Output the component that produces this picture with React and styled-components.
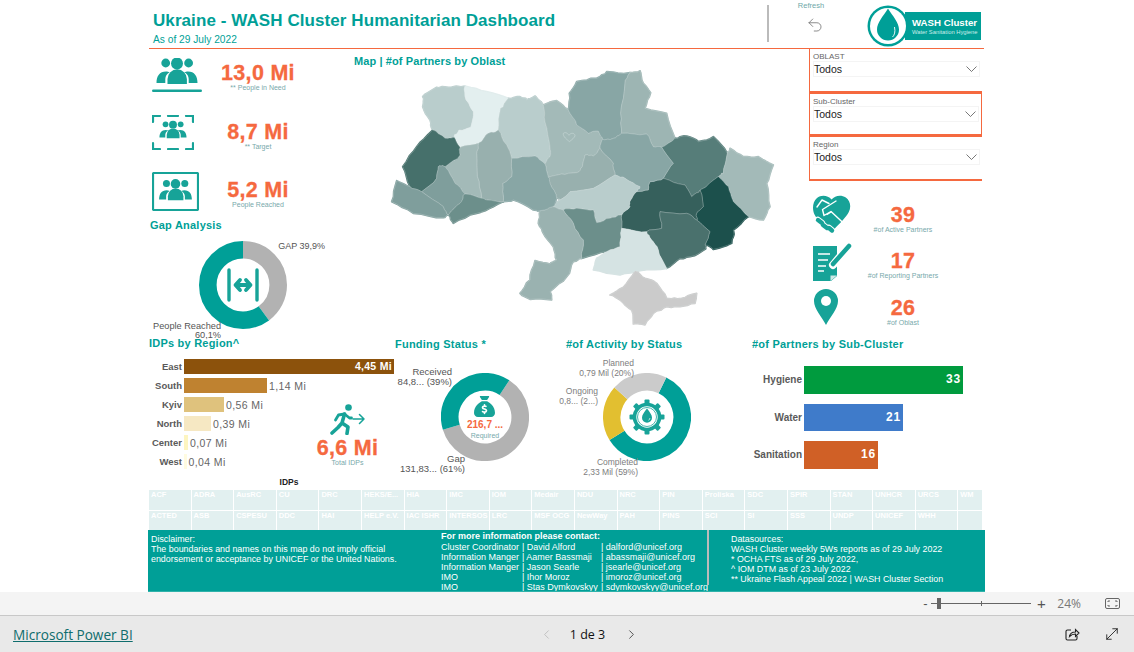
import React from "react";
import styled, { createGlobalStyle } from "styled-components";
import { FaSackDollar } from "react-icons/fa6";
import { Undo2, ChevronLeft, ChevronRight, MoveDiagonal } from "lucide-react";

const TEAL = "#009f97";
const ICON = "#17a398";
const ORANGE = "#f5693f";

const GlobalStyle = createGlobalStyle`
  html, body {
    margin: 0;
    padding: 0;
    overflow: hidden;
    background: #fff;
    font-family: "Liberation Sans", Arial, sans-serif;
  }
`;

const oblasts = [
  { fill: "#b9cdcc", d: "158,240 150,210 128,170 128,140 170,112 205,112 255,108 258,150 280,185 272,232 237,240 222,262 195,265" },
  { fill: "#e3efef", d: "255,108 320,125 385,145 362,175 355,240 325,250 295,280 240,292 222,262 237,240 272,232 280,185 258,150" },
  { fill: "#b9cdcc", d: "385,145 420,140 440,150 465,138 490,165 495,215 510,290 510,320 495,342 465,318 395,325 380,285 355,240 362,175" },
  { fill: "#a3bab8", d: "490,165 530,152 565,180 590,225 625,250 655,243 668,268 660,295 640,318 615,315 607,350 590,368 545,372 505,382 495,342 510,320 510,290 495,215" },
  { fill: "#88a6a5", d: "565,180 568,130 590,95 650,85 680,65 750,68 735,100 722,190 725,250 700,265 668,268 655,243 625,250 590,225" },
  { fill: "#9db5b3", d: "750,68 780,62 790,100 812,128 795,175 860,190 885,265 845,292 820,290 800,252 725,250 722,190 735,100" },
  { fill: "#567d79", d: "885,265 920,258 955,275 1000,260 1042,310 1030,370 1015,380 960,420 935,440 915,405 850,385 880,340 845,292" },
  { fill: "#a3bab8", d: "1050,295 1090,320 1135,320 1180,345 1160,400 1170,470 1150,510 1105,500 1060,455 1045,410 1015,380 1030,370 1042,310" },
  { fill: "#1c504c", d: "1015,380 1045,410 1060,455 1105,500 1060,540 1055,580 1000,598 975,585 990,545 950,510 950,490 970,470 960,420" },
  { fill: "#36605c", d: "810,395 850,385 915,405 935,440 960,420 970,470 950,490 950,510 920,490 840,485 845,535 800,545 725,535 725,495 750,470 752,450 770,425 805,420" },
  { fill: "#4a716d", d: "840,485 920,490 950,510 990,545 975,585 975,598 930,620 900,625 860,655 835,600 815,570 800,545 845,535" },
  { fill: "#88a6a5", d: "668,268 700,265 725,250 800,252 820,290 845,292 880,340 850,385 810,395 805,420 770,425 780,410 735,385 705,375 700,340 660,295" },
  { fill: "#98b0ae", d: "505,382 545,372 590,368 607,350 615,315 640,318 660,295 700,340 705,375 640,415 570,425 540,450 530,445 510,400" },
  { fill: "#b9cdcc", d: "518,470 540,450 570,425 640,415 705,375 735,385 780,410 770,425 752,450 750,470 725,495 690,505 650,518 640,480 590,475 550,480" },
  { fill: "#6c8f8b", d: "550,480 590,475 640,480 650,518 690,505 725,495 725,535 720,590 680,605 605,625 610,570 580,520" },
  { fill: "#d5e3e3", d: "725,535 800,545 815,570 835,600 860,655 780,662 720,675 640,660 650,625 680,605 720,590" },
  { fill: "#9ab2b0", d: "480,482 518,470 550,480 580,520 610,570 605,625 580,635 560,680 510,725 515,750 450,748 420,730 450,690 465,632 510,642 530,630 520,590 490,550 475,520" },
  { fill: "#cbcbcb", d: "690,735 730,712 765,662 795,685 830,700 860,745 905,745 950,730 945,760 900,770 860,770 820,790 795,825 760,822 755,780 720,750" },
  { fill: "#88a6a5", d: "395,325 465,318 495,342 505,382 510,400 530,445 518,470 480,482 460,480 400,450 370,455 368,400 395,380" },
  { fill: "#98b0ae", d: "295,280 325,250 355,240 380,285 395,325 395,380 368,400 370,455 320,450 305,445 292,380 290,310" },
  { fill: "#a3bab8", d: "240,292 295,280 290,310 292,380 305,445 255,432 225,400 195,350 240,315" },
  { fill: "#46706b", d: "158,240 195,265 222,262 240,292 240,315 195,350 175,350 170,385 125,425 90,410 68,350 110,290" },
  { fill: "#7f9e9c", d: "175,350 195,350 225,400 255,432 240,460 205,495 190,470 125,425 170,385" },
  { fill: "#6c8f8b", d: "255,432 305,445 320,450 370,455 340,470 290,490 220,520 205,495 240,460" },
  { fill: "#7f9e9c", d: "50,392 90,410 125,425 190,470 205,495 190,503 100,490 35,455" },
];

// rough borders: the same edge gets the same wobble in both oblasts that share it
const wobble = (a, b, depth) => {
  if (depth === 0) return [];
  const seed = Math.abs(Math.sin((a[0] + b[0]) * 12.9898 + (a[1] + b[1]) * 78.233) * 43758.5453) % 1;
  const mid = [(a[0] + b[0]) / 2 + (seed - 0.5) * 5, (a[1] + b[1]) / 2 + ((seed * 7) % 1 - 0.5) * 5];
  return [...wobble(a, mid, depth - 1), mid, ...wobble(mid, b, depth - 1)];
};

const roughPoints = (d) => {
  const pts = d.split(" ").map((p) => p.split(",").map(Number));
  return pts
    .flatMap((p, i) => [p, ...wobble(p, pts[(i + 1) % pts.length], 2)])
    .map((p) => p.map((n) => n.toFixed(1)).join(","))
    .join(" ");
};

const regions = [
  { name: "East", value: "4,45 Mi", width: 210, color: "#8c520c", inside: true },
  { name: "South", value: "1,14 Mi", width: 83, color: "#bf8230" },
  { name: "Kyiv", value: "0,56 Mi", width: 40, color: "#dfc27d" },
  { name: "North", value: "0,39 Mi", width: 27, color: "#f6e8c3" },
  { name: "Center", value: "0,07 Mi", width: 4, color: "#fdf5c0" },
  { name: "West", value: "0,04 Mi", width: 2.5, color: "#fffbe0" },
];

const clusters = [
  { name: "Hygiene", value: 33, width: 159, color: "#009b3e" },
  { name: "Water", value: 21, width: 99, color: "#3f7bca" },
  { name: "Sanitation", value: 16, width: 74, color: "#d06026" },
];

const tiles = [
  "ACF", "ADRA", "AusRC", "CU", "DRC", "HEKS/E...", "HIA", "IMC", "IOM", "Medair", "NDU", "NRC", "PIN", "Proliska", "SDC", "SPIR", "STAN", "UNHCR", "URCS", "WM",
  "ACTED", "ASB", "CSPESU", "DDC", "HAI", "HELP e.V.", "IAC ISHR", "INTERSOS", "LRC", "MSF OCG", "NewWay", "PAH", "PINS", "SCI", "SI", "SSS", "UNDP", "UNICEF", "WHH", "",
];

const contacts = [
  ["Cluster Coordinator", "| David Alford", "| dalford@unicef.org"],
  ["Information Manger", "| Aamer Bassmaji", "| abassmaji@unicef.org"],
  ["Information Manger", "| Jason Searle", "| jsearle@unicef.org"],
  ["IMO", "| Ihor Moroz", "| imoroz@unicef.org"],
  ["IMO", "| Stas Dymkovskyy", "| sdymkovskyy@unicef.org"],
];

const Donut = ({ segments, start }) => {
  let used = 0;
  return (
    <svg width="88" height="88" viewBox="0 0 88 88">
      <g transform={`rotate(${start - 90} 44 44)`}>
        {segments.map((s) => {
          const circle = (
            <circle
              key={s.color}
              cx="44"
              cy="44"
              r="35.2"
              fill="none"
              stroke={s.color}
              strokeWidth="17.6"
              pathLength="100"
              strokeDasharray={`${s.pct} ${100 - s.pct}`}
              strokeDashoffset={-used}
            />
          );
          used += s.pct;
          return circle;
        })}
      </g>
    </svg>
  );
};

const People = () => (
  <g fill={ICON}>
    <circle cx="13.7" cy="5" r="4.4" />
    <circle cx="25" cy="5.5" r="6" />
    <circle cx="36.6" cy="5" r="4.4" />
    <path d="M15.5 26v-5a9.7 9.7 0 0 1 19.4 0v5z" />
    <path d="M4.500 25c0-7 3-11.500 9.500-11.500 1.500 0 2.500.3 3.500.8-3 2-4 4-4.200 6.700v4z" />
    <path d="M45.500 25c0-7-3-11.500-9.500-11.500-1.500 0-2.500.3-3.500.8 3 2 4 4 4.200 6.700v4z" />
  </g>
);

const PeopleLine = () => (
  <svg width="50" height="34" viewBox="0 0 50 34">
    <People />
    <rect y="31.500" width="50" height="2.500" rx="1.200" fill={ICON} />
  </svg>
);

const PeopleFrame = () => (
  <svg width="42" height="35" viewBox="0 0 42 35">
    <g fill="none" stroke={ICON} strokeWidth="2.200" strokeLinecap="round">
      <path d="M1 7V1h7M34 1h7v6M1 28v6h7M34 34h7v-6M16 1h10M16 34h10" />
    </g>
    <g transform="translate(4.500 6) scale(.66)">
      <People />
    </g>
  </svg>
);

const PeopleBox = () => (
  <svg width="47" height="39" viewBox="0 0 47 39">
    <rect x="1" y="1" width="45" height="37" rx="1" fill="none" stroke={ICON} strokeWidth="2.200" />
    <g transform="translate(3.500 7.500) scale(.8)">
      <People />
    </g>
  </svg>
);

const GapIcon = () => (
  <svg width="36" height="34" viewBox="0 0 36 34" fill="none" stroke={ICON} strokeLinecap="round" strokeLinejoin="round">
    <path d="M4 2v30M32 2v30" strokeWidth="3.400" />
    <path d="M11 17h14M15 12l-4.500 5 4.500 5M21 12l4.500 5-4.500 5" strokeWidth="3.800" />
  </svg>
);

const GearDrop = () => {
  const teeth = [0, 45, 90, 135, 180, 225, 270, 315];
  return (
    <svg width="36" height="36" viewBox="0 0 36 36">
      {teeth.map((a) => (
        <rect key={a} x="15.500" y="0.500" width="5" height="6" rx="1" fill={ICON} transform={`rotate(${a} 18 18)`} />
      ))}
      <circle cx="18" cy="18" r="12.500" fill="none" stroke={ICON} strokeWidth="3.600" />
      <circle cx="18" cy="18" r="9.500" fill="#fff" stroke={ICON} strokeWidth=".8" />
      <path d="M18 9.500c2.800 3.800 5 6.200 5 9.200a5 5 0 0 1-10 0c0-3 2.200-5.400 5-9.200z" fill={ICON} />
      <path d="M19.500 21.200a2.500 2.500 0 0 0 1.400-2" fill="none" stroke="#fff" strokeWidth=".8" />
    </svg>
  );
};

const Handshake = () => (
  <svg width="39" height="40" viewBox="0 0 39 40">
    <path d="M19.500 4.500C23 .5 29-.5 33.800 2.500c4.800 3.500 5.500 9.500 3 14.500-2.500 5-9 11.500-14 16.500l-3.500 3C13 32 6 26 2.500 19.500 0 14 .5 7 5 3 9.500-.5 16 .5 19.500 4.500z" fill={ICON} />
    <g fill="none" stroke="#fff" strokeLinecap="round" strokeLinejoin="round" strokeWidth="1.400">
      <path d="M24 6L10.500 14.500l1.500 6 7-4 15 14" />
      <path d="M5 12l5-7 7 3.500" />
      <path d="M19 17l-4 2.500" />
    </g>
    <g stroke="#fff" strokeWidth="6.400" strokeLinecap="round">
      <path d="M6 25l4 3M11 30l4 3M17 33l3 2.500" />
    </g>
    <g stroke={ICON} strokeWidth="4.400" strokeLinecap="round">
      <path d="M6 25l4 3M11 30l4 3M17 33l3 2.500" />
    </g>
  </svg>
);

const ReportIcon = () => (
  <svg width="40" height="40" viewBox="0 0 40 40">
    <path d="M1 5h24v30l-6 5H1z" fill={ICON} />
    <path d="M18.500 34.500h6.500l-6.500 5.500z" fill="#cfe9e6" />
    <path d="M21 24L37 5" stroke="#fff" strokeWidth="8" strokeLinecap="round" />
    <path d="M21 23L37 5" stroke={ICON} strokeWidth="4.500" strokeLinecap="round" />
    <path d="M6 13h12M6 19h10M6 25h8M6 30h6" stroke="#fff" strokeWidth="1.500" />
  </svg>
);

const Pin = () => (
  <svg width="24" height="36" viewBox="0 0 24 36">
    <path d="M12 0a12 12 0 0 1 12 12c0 8-8 16-12 24C8 28 0 20 0 12A12 12 0 0 1 12 0z" fill={ICON} />
    <circle cx="12" cy="12" r="5" fill="#fff" />
  </svg>
);

const Runner = () => (
  <svg width="35" height="31" viewBox="0 0 35 31" fill="none" stroke={ICON} strokeLinecap="round" strokeLinejoin="round">
    <circle cx="18.500" cy="3.500" r="3.300" fill={ICON} stroke="none" />
    <path d="M14.500 10l-2.500 9 6 4-1 6.500M12 19l-4 4.500-6 5.500" strokeWidth="3.600" />
    <path d="M14.500 10l-6 1-3 5M14.500 10l5 4h2" strokeWidth="2.800" />
    <path d="M23 15h11M29.500 10.500l4.500 4.500-4.500 4.500" strokeWidth="1.500" />
  </svg>
);

const Chevron = () => (
  <ChevronSvg viewBox="0 0 11 6">
    <path d="M.5.5l5 5 5-5" fill="none" stroke="#555" strokeWidth=".8" />
  </ChevronSvg>
);

const slicers = ["OBLAST", "Sub-Cluster", "Region"];

export default function App() {
  return (
    <Page>
      <GlobalStyle />
      <Report>
        <Header>
          <TitleBlock>
            <Title>Ukraine - WASH Cluster Humanitarian Dashboard</Title>
            <AsOf>As of 29 July 2022</AsOf>
          </TitleBlock>
          <HeaderRule />
          <RefreshBox>
            <RefreshLabel>Refresh</RefreshLabel>
            <Undo2 size={18} strokeWidth={1} color="#666" />
          </RefreshBox>
          <Logo>
            <LogoBanner>
              <LogoName>WASH Cluster</LogoName>
              <LogoSub>Water Sanitation Hygiene</LogoSub>
            </LogoBanner>
            <LogoMark width="42" height="42" viewBox="0 0 42 42">
              <circle cx="21" cy="21" r="20.500" fill={TEAL} />
              <circle cx="21" cy="21" r="18" fill="#fff" />
              <path d="M21 3.500c5 8 11 14 11 21a11 11 0 0 1-22 0C10 17.500 16 11.500 21 3.500z" fill={TEAL} />
              <path d="M27.500 22c1 5 0 8-2 10" fill="none" stroke="#fff" strokeWidth=".9" />
            </LogoMark>
          </Logo>
        </Header>

        <Upper>
          <LeftColumn>
            <KpiRow $height={38} $top={9}>
              <PeopleLine />
              <KpiText>
                <KpiValue>13,0 Mi</KpiValue>
                <KpiCaption>** People in Need</KpiCaption>
              </KpiText>
            </KpiRow>
            <KpiRow $height={42} $top={19}>
              <PeopleFrame />
              <KpiText>
                <KpiValue>8,7 Mi</KpiValue>
                <KpiCaption>** Target</KpiCaption>
              </KpiText>
            </KpiRow>
            <KpiRow $height={44} $top={15}>
              <PeopleBox />
              <KpiText>
                <KpiValue>5,2 Mi</KpiValue>
                <KpiCaption>People Reached</KpiCaption>
              </KpiText>
            </KpiRow>
            <GapTitle>Gap Analysis</GapTitle>
            <DonutBox $left={47} $top={9}>
              <Donut start={0} segments={[{ color: "#b2b2b2", pct: 39.9 }, { color: TEAL, pct: 60.1 }]} />
              <DonutCenter>
                <GapIcon />
              </DonutCenter>
              <DonutLabel $top={0} $right={-38} $size={9}>GAP 39,9%</DonutLabel>
              <DonutLabel $top={81} $right={66} $size={9.2} $tight>
                People Reached
                <br />
                60,1%
              </DonutLabel>
            </DonutBox>
          </LeftColumn>

          <MapColumn>
            <MapTitle>Map | #of Partners by Oblast</MapTitle>
            <UkraineMap width="400" height="260" viewBox="0 60 1200 780">
              {oblasts.map((o) => (
                <polygon key={o.d} points={roughPoints(o.d)} fill={o.fill} stroke={o.fill} strokeWidth="5" strokeLinejoin="round" />
              ))}
              {oblasts.map((o) => (
                <polygon key={o.d} points={roughPoints(o.d)} fill={o.fill} stroke="#dbe6e6" strokeWidth=".8" strokeLinejoin="round" />
              ))}
              <path d="M550 250c8-6 14 2 17 6 4-8 16-8 18 0 0 6-10 14-17 19-6-6-20-15-18-25z" fill="none" stroke="#c6d6d5" strokeWidth="2" />
            </UkraineMap>
          </MapColumn>

          <RightColumn>
            <SlicerStack>
              {slicers.map((name, i) => (
                <Slicer key={name} $boxed={i === 1} $last={i === 2}>
                  <SlicerLabel>{name}</SlicerLabel>
                  <SlicerSelect>
                    Todos
                    <Chevron />
                  </SlicerSelect>
                </Slicer>
              ))}
            </SlicerStack>
            <PartnerKpis>
              <PartnerRow $height={46}>
                <Handshake />
                <KpiText>
                  <KpiValue>39</KpiValue>
                  <KpiCaption>#of Active Partners</KpiCaption>
                </KpiText>
              </PartnerRow>
              <PartnerRow $height={46}>
                <ReportIcon />
                <KpiText>
                  <KpiValue>17</KpiValue>
                  <KpiCaption>#of Reporting Partners</KpiCaption>
                </KpiText>
              </PartnerRow>
              <PartnerRow $height={44} $top={2}>
                <PinCell>
                  <Pin />
                </PinCell>
                <KpiText>
                  <KpiValue>26</KpiValue>
                  <KpiCaption>#of Oblast</KpiCaption>
                </KpiText>
              </PartnerRow>
            </PartnerKpis>
          </RightColumn>
        </Upper>

        <Middle>
          <IdpPanel>
            <IdpTitle>IDPs by Region^</IdpTitle>
            <RegionBars>
              {regions.map((r) => (
                <RegionRow key={r.name}>
                  <RegionName>{r.name}</RegionName>
                  <RegionBar $color={r.color} style={{ width: r.width }}>
                    {r.inside && r.value}
                  </RegionBar>
                  {!r.inside && <RegionValue>{r.value}</RegionValue>}
                </RegionRow>
              ))}
            </RegionBars>
            <AxisTitle>IDPs</AxisTitle>
            <TotalIdps>
              <Runner />
              <KpiValue>6,6 Mi</KpiValue>
              <KpiCaption>Total IDPs</KpiCaption>
            </TotalIdps>
          </IdpPanel>

          <ChartPanel $pad={5}>
            <SectionTitle>Funding Status *</SectionTitle>
            <DonutBox $left={46} $top={22}>
              <Donut start={33.6} segments={[{ color: "#b2b2b2", pct: 61 }, { color: TEAL, pct: 39 }]} />
              <DonutCenter>
                <FundingStack>
                  <FaSackDollar size={21} color={ICON} />
                  <FundingValue>216,7 ...</FundingValue>
                  <KpiCaption>Required</KpiCaption>
                </FundingStack>
              </DonutCenter>
              <DonutLabel $top={-6} $right={77} $size={9.5}>
                Received
                <br />
                84,8... (39%)
              </DonutLabel>
              <DonutLabel $top={81} $right={64} $size={9.5}>
                Gap
                <br />
                131,83... (61%)
              </DonutLabel>
            </DonutBox>
          </ChartPanel>

          <ChartPanel $pad={4}>
            <SectionTitle>#of Activity by Status</SectionTitle>
            <DonutBox $left={37} $top={22}>
              <Donut
                start={26}
                segments={[
                  { color: TEAL, pct: 59 },
                  { color: "#e2bf30", pct: 20.5 },
                  { color: "#cbcbcb", pct: 20.5 },
                ]}
              />
              <DonutCenter>
                <GearDrop />
              </DonutCenter>
              <DonutLabel $top={-15} $right={57} $size={8.5} $light>
                Planned
                <br />
                0,79 Mil (20%)
              </DonutLabel>
              <DonutLabel $top={13} $right={93} $size={8.5} $light>
                Ongoing
                <br />
                0,8... (2...)
              </DonutLabel>
              <DonutLabel $top={84} $right={53} $size={8.5} $light>
                Completed
                <br />
                2,33 Mil (59%)
              </DonutLabel>
            </DonutBox>
          </ChartPanel>

          <ChartPanel $pad={4}>
            <SectionTitle>#of Partners by Sub-Cluster</SectionTitle>
            <ClusterBars>
              {clusters.map((c) => (
                <ClusterRow key={c.name}>
                  <ClusterName>{c.name}</ClusterName>
                  <ClusterBar $color={c.color} style={{ width: c.width }}>
                    {c.value}
                  </ClusterBar>
                </ClusterRow>
              ))}
            </ClusterBars>
          </ChartPanel>
        </Middle>

        <TileGrid>
          {tiles.map((t, i) => (
            <Tile key={i}>{t}</Tile>
          ))}
        </TileGrid>

        <InfoBar>
          <InfoColumn>
            <InfoText>Disclaimer:</InfoText>
            <InfoText>The boundaries and names on this map do not imply official</InfoText>
            <InfoText>endorsement or acceptance by UNICEF or the United Nations.</InfoText>
          </InfoColumn>
          <ContactColumn>
            <ContactHead>For more information please contact:</ContactHead>
            {contacts.map((row) => (
              <ContactRow key={row[2]}>
                <span>{row[0]}</span>
                <span>{row[1]}</span>
                <span>{row[2]}</span>
              </ContactRow>
            ))}
          </ContactColumn>
          <SourcesColumn>
            <InfoText>Datasources:</InfoText>
            <InfoText>WASH Cluster weekly 5Ws reports as of 29 July 2022</InfoText>
            <InfoText>* OCHA FTS as of 29 July 2022,</InfoText>
            <InfoText>^ IOM DTM as of 23 July 2022</InfoText>
            <InfoText>** Ukraine Flash Appeal 2022 | WASH Cluster Section</InfoText>
          </SourcesColumn>
        </InfoBar>
      </Report>

      <ZoomBar>
        <ZoomSign>-</ZoomSign>
        <ZoomTrack>
          <ZoomThumb />
          <ZoomTick />
        </ZoomTrack>
        <ZoomSign $large>+</ZoomSign>
        <ZoomPercent>24%</ZoomPercent>
        <svg width="15" height="11" viewBox="0 0 15 11" fill="none" stroke="#666">
          <rect x=".5" y=".5" width="14" height="10" rx="1.500" />
          <path d="M3 4V3h2M10 3h2v1M3 7v1h2M10 8h2V7" />
        </svg>
      </ZoomBar>

      <Footer>
        <BrandLink>Microsoft Power BI</BrandLink>
        <Pager>
          <ChevronLeft size={15} strokeWidth={1} color="#aaa" />
          <PageCount>1 de 3</PageCount>
          <ChevronRight size={15} strokeWidth={1.300} color="#333" />
        </Pager>
        <FooterIcons>
          <svg width="15" height="15" viewBox="0 0 15 15" fill="none" stroke="#222" strokeWidth="1.100">
            <path d="M6 3H2.500A1.500 1.500 0 0 0 1 4.500v7A1.500 1.500 0 0 0 2.500 13h8a1.500 1.500 0 0 0 1.500-1.500V9" />
            <path d="M4.500 9.500c.5-3 2.500-4.500 6-4.500V2.500L14 6l-3.500 3.500V7c-2.500 0-4.500 1-6 2.500z" />
          </svg>
          <MoveDiagonal size={18} strokeWidth={1.200} color="#222" />
        </FooterIcons>
      </Footer>
    </Page>
  );
}

const Page = styled.div`
  width: 1134px;
  height: 652px;
  display: flex;
  flex-direction: column;
  overflow: hidden;
  background: #fff;
`;

const Report = styled.div`
  width: 837px;
  height: 592px;
  margin-left: 148px;
  display: flex;
  flex-direction: column;
  overflow: hidden;
`;

const Header = styled.div`
  height: 48px;
  flex: none;
  display: flex;
  width: 835px;
  margin-left: 1px;
  border-bottom: 1px solid ${ORANGE};
`;

const TitleBlock = styled.div`
  width: 614px;
  padding: 11px 0 0 4px;
`;

const Title = styled.div`
  font-size: 17px;
  line-height: 20px;
  font-weight: 700;
  color: ${TEAL};
  letter-spacing: 0.08px;
  white-space: nowrap;
`;

const AsOf = styled.div`
  margin-top: 3px;
  font-size: 10.2px;
  line-height: 12px;
  color: ${TEAL};
`;

const HeaderRule = styled.div`
  width: 2px;
  height: 37px;
  margin-top: 5px;
  background: #bbb;
`;

const RefreshBox = styled.div`
  width: 82px;
  display: flex;
  flex-direction: column;
  align-items: center;
  gap: 6px;
  padding-top: 1px;
  padding-left: 10px;
  box-sizing: border-box;
`;

const RefreshLabel = styled.div`
  font-size: 7.5px;
  line-height: 9px;
  color: #6fa8a8;
  margin-left: -8px;
`;

const Logo = styled.div`
  position: relative;
  width: 114px;
  height: 42px;
  margin: 5px 0 0 16px;
  display: flex;
  align-items: center;
  justify-content: flex-end;
`;

const LogoMark = styled.svg`
  position: absolute;
  left: 0;
  top: 0;
`;

const LogoBanner = styled.div`
  width: 76px;
  height: 28px;
  background: ${TEAL};
  box-sizing: border-box;
  padding: 5px 0 0 7px;
  color: #fff;
  white-space: nowrap;
`;

const LogoName = styled.div`
  font-size: 9.7px;
  line-height: 11px;
  font-weight: 700;
`;

const LogoSub = styled.div`
  font-size: 5.8px;
  line-height: 8px;
  color: #cdeeea;
`;

const Upper = styled.div`
  height: 286px;
  flex: none;
  display: grid;
  grid-template-columns: 202px 458px 176px;
`;

const LeftColumn = styled.div`
  padding-left: 4px;
  display: flex;
  flex-direction: column;
`;

const KpiText = styled.div`
  align-self: center;
  display: flex;
  flex-direction: column;
  align-items: center;
  white-space: nowrap;
`;

const KpiRow = styled.div`
  height: ${(p) => p.$height}px;
  margin-top: ${(p) => p.$top}px;
  display: grid;
  grid-template-columns: 50px 112px;
  align-items: start;

  ${KpiText} {
    padding-top: 2px;
  }
`;

const KpiValue = styled.div`
  font-size: 21.5px;
  line-height: 20px;
  font-weight: 700;
  color: ${ORANGE};
  letter-spacing: 0.3px;
  -webkit-text-stroke: 0.3px ${ORANGE};
`;

const KpiCaption = styled.div`
  font-size: 7px;
  line-height: 10px;
  color: #78a9ab;
`;

const SectionTitle = styled.div`
  font-size: 11px;
  line-height: 14px;
  font-weight: 700;
  color: ${TEAL};
  letter-spacing: 0.22px;
  white-space: nowrap;
`;

const GapTitle = styled(SectionTitle)`
  margin: 2px 0 0 -2px;
`;

const IdpTitle = styled(SectionTitle)`
  margin-top: 2px;
  line-height: 10px;
`;

const DonutBox = styled.div`
  position: relative;
  width: 88px;
  height: 88px;
  margin: ${(p) => p.$top}px 0 0 ${(p) => p.$left}px;

  svg {
    display: block;
  }
`;

const DonutCenter = styled.div`
  position: absolute;
  inset: 0;
  display: flex;
  align-items: center;
  justify-content: center;
`;

const DonutLabel = styled.div`
  position: absolute;
  top: ${(p) => p.$top}px;
  right: ${(p) => p.$right}px;
  font-size: ${(p) => p.$size}px;
  line-height: ${(p) => (p.$tight ? 9 : 10)}px;
  text-align: right;
  white-space: nowrap;
  color: ${(p) => (p.$light ? "#7d7d7d" : "#555")};
`;

const FundingStack = styled.div`
  display: flex;
  flex-direction: column;
  align-items: center;
  margin-top: 3px;
`;

const FundingValue = styled.div`
  margin-top: 2px;
  font-size: 10px;
  line-height: 12px;
  font-weight: 700;
  color: ${ORANGE};
`;

const MapColumn = styled.div`
  display: flex;
  flex-direction: column;
`;

const MapTitle = styled(SectionTitle)`
  margin: 5px 0 2px 4px;
  letter-spacing: 0.1px;
`;

const UkraineMap = styled.svg`
  display: block;
  margin-left: 30px;
`;

const RightColumn = styled.div`
  padding-left: 1px;
`;

const SlicerStack = styled.div`
  margin-top: -1px;
  width: 173px;
  border-top: 1.5px solid ${ORANGE};
`;

const Slicer = styled.div`
  box-sizing: border-box;
  height: ${(p) => (p.$last ? 44 : p.$boxed ? 43 : 45)}px;
  padding: 3px 2px 0 3px;
  border-left: 1.5px solid ${ORANGE};
  border-right: ${(p) => (p.$boxed ? `1px solid ${ORANGE}` : "none")};
  border-bottom: ${(p) => (p.$last ? 2.5 : 3)}px solid ${ORANGE};
`;

const SlicerLabel = styled.div`
  font-size: 8px;
  line-height: 9px;
  color: #666;
`;

const SlicerSelect = styled.div`
  height: 14px;
  display: flex;
  align-items: center;
  justify-content: space-between;
  font-size: 10.5px;
  color: #222;
  border: 1px solid #f4f4f4;
`;

const ChevronSvg = styled.svg`
  width: 11px;
  height: 6px;
  margin-right: 2px;
`;

const PartnerKpis = styled.div`
  margin-top: 14px;
  padding-left: 3px;
`;

const PartnerRow = styled.div`
  height: ${(p) => p.$height}px;
  margin-top: ${(p) => p.$top || 0}px;
  display: grid;
  grid-template-columns: 40px 102px;
  align-items: start;

  ${KpiText} {
    padding-top: 4px;
  }
`;

const PinCell = styled.div`
  padding-left: 2px;
`;

const Middle = styled.div`
  height: 155px;
  flex: none;
  display: grid;
  grid-template-columns: 242px 172px 186px 237px;
`;

const IdpPanel = styled.div`
  position: relative;
  padding: 1px 0 0 1px;
`;

const RegionBars = styled.div`
  margin-top: 11px;
  display: flex;
  flex-direction: column;
  gap: 4px;
`;

const RegionRow = styled.div`
  display: flex;
  align-items: center;
  height: 15px;
  gap: 2px;
`;

const RegionName = styled.div`
  width: 33px;
  flex: none;
  text-align: right;
  font-size: 9.5px;
  font-weight: 700;
  color: #5a5a5a;
  white-space: nowrap;
`;

const RegionBar = styled.div`
  flex: none;
  height: 15px;
  background: ${(p) => p.$color};
  color: #fff;
  font-size: 10.5px;
  line-height: 15px;
  font-weight: 700;
  text-align: right;
  letter-spacing: 0.3px;
  box-sizing: border-box;
  white-space: nowrap;
  border-right: 2px solid ${(p) => p.$color};
`;

const RegionValue = styled.div`
  font-size: 10.5px;
  color: #666;
  letter-spacing: 0.4px;
  white-space: nowrap;
`;

const AxisTitle = styled.div`
  margin-top: 8px;
  width: 280px;
  text-align: center;
  font-size: 8.5px;
  line-height: 10px;
  font-weight: 700;
  color: #222;
`;

const TotalIdps = styled.div`
  position: absolute;
  left: 142px;
  top: 69px;
  width: 115px;
  display: flex;
  flex-direction: column;
  align-items: center;
  white-space: nowrap;

  svg {
    margin-bottom: 3px;
  }
`;

const ChartPanel = styled.div`
  padding: 2px 0 0 ${(p) => p.$pad}px;
`;

const ClusterBars = styled.div`
  margin-top: 15px;
  display: flex;
  flex-direction: column;
  gap: 10px;
`;

const ClusterRow = styled.div`
  display: flex;
  align-items: center;
  height: 27.5px;
  gap: 2px;
`;

const ClusterName = styled.div`
  width: 50px;
  text-align: right;
  font-size: 10px;
  font-weight: 700;
  color: #5a5a5a;
`;

const ClusterBar = styled.div`
  height: 27.5px;
  box-sizing: border-box;
  padding-right: 2px;
  background: ${(p) => p.$color};
  color: #fff;
  font-size: 12px;
  line-height: 26px;
  font-weight: 700;
  letter-spacing: 0.8px;
  text-align: right;
`;

const TileGrid = styled.div`
  height: 40px;
  width: 833px;
  margin-left: 1px;
  flex: none;
  display: grid;
  grid-template-columns: repeat(19, 41.6px) 1fr;
  grid-template-rows: 1fr 1fr;
  background: #fff;
  gap: 1px;
  overflow: hidden;
`;

const Tile = styled.div`
  background: #e2f0f0;
  color: #fff;
  font-size: 7.5px;
  line-height: 10px;
  font-weight: 700;
  padding-left: 2px;
  white-space: nowrap;
  overflow: hidden;
`;

const InfoBar = styled.div`
  height: 62px;
  flex: none;
  display: grid;
  grid-template-columns: 293px 268px 1fr;
  background: ${TEAL};
  border-bottom: 1px solid #2fb2aa;
  box-sizing: border-box;
  color: #fff;
  overflow: hidden;
`;

const InfoColumn = styled.div`
  padding: 4px 0 0 3px;
`;

const InfoText = styled.div`
  font-size: 8.9px;
  line-height: 10px;
  white-space: nowrap;
`;

const ContactColumn = styled.div`
  position: relative;
  padding-top: 1px;
  overflow: hidden;

  &::after {
    content: "";
    position: absolute;
    top: 0;
    right: 0;
    width: 2px;
    height: 55px;
    background: #bbb;
  }
`;

const ContactHead = styled.div`
  font-size: 9px;
  line-height: 11px;
  font-weight: 700;
  white-space: nowrap;
`;

const ContactRow = styled.div`
  display: grid;
  grid-template-columns: 81px 79px 1fr;
  font-size: 9px;
  line-height: 10px;
  white-space: nowrap;
`;

const SourcesColumn = styled.div`
  padding: 4px 0 0 22px;
`;

const ZoomBar = styled.div`
  height: 23px;
  flex: none;
  display: flex;
  align-items: center;
  justify-content: flex-end;
  padding-right: 14px;
  background: #f4f4f4;
  border-bottom: 1px solid #c8c8c8;
`;

const ZoomSign = styled.div`
  font-size: ${(p) => (p.$large ? 15 : 13)}px;
  color: #555;
  width: 10px;
  text-align: center;
`;

const ZoomTrack = styled.div`
  position: relative;
  width: 100px;
  height: 1px;
  margin: 0 5px 0 1px;
  background: #666;
`;

const ZoomThumb = styled.div`
  position: absolute;
  left: 6px;
  top: -5px;
  width: 4px;
  height: 11px;
  background: #666;
`;

const ZoomTick = styled.div`
  position: absolute;
  left: 50px;
  top: -2px;
  width: 1px;
  height: 5px;
  background: #666;
`;

const ZoomPercent = styled.div`
  margin: 0 24px 0 11px;
  font-family: "Open Sans", sans-serif;
  font-size: 12px;
  color: #777;
`;

const Footer = styled.div`
  flex: 1;
  display: grid;
  grid-template-columns: 540px 120px 1fr;
  align-items: center;
  padding-left: 13px;
  background: #e9e9e9;
`;

const BrandLink = styled.div`
  font-family: "Open Sans", sans-serif;
  font-size: 13.6px;
  color: #0f6d6d;
  text-decoration: underline;
`;

const Pager = styled.div`
  display: flex;
  align-items: center;
  justify-content: space-between;
  width: 100px;
  margin-left: -14px;
`;

const PageCount = styled.div`
  font-family: "Open Sans", sans-serif;
  font-size: 12.5px;
  color: #111;
  margin-left: -3px;
`;

const FooterIcons = styled.div`
  display: flex;
  align-items: center;
  justify-content: flex-end;
  gap: 23px;
  padding-right: 13px;
`;
